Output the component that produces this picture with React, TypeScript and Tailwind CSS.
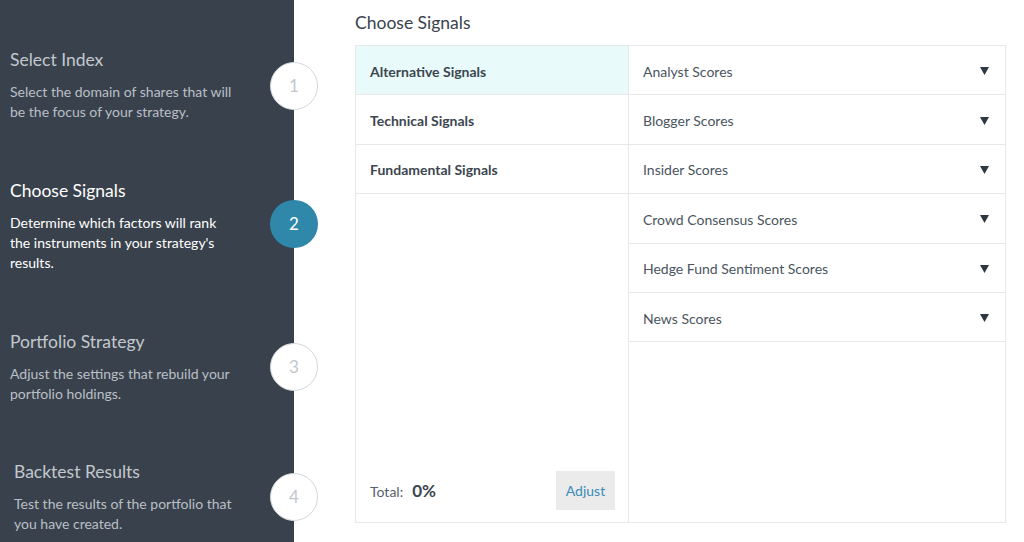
import React from 'react';

const steps = [
  {
    n: 1,
    title: 'Select Index',
    desc: ['Select the domain of shares that will', 'be the focus of your strategy.'],
    h: 'h-[131px]',
    circle: 'top-[13px]',
    indent: 'pl-[10px]',
  },
  {
    n: 2,
    title: 'Choose Signals',
    desc: ['Determine which factors will rank', "the instruments in your strategy's", 'results.'],
    h: 'h-[151px]',
    circle: 'top-[20px]',
    indent: 'pl-[10px]',
    active: true,
  },
  {
    n: 3,
    title: 'Portfolio Strategy',
    desc: ['Adjust the settings that rebuild your', 'portfolio holdings.'],
    h: 'h-[130px]',
    circle: 'top-[12px]',
    indent: 'pl-[10px]',
  },
  {
    n: 4,
    title: 'Backtest Results',
    desc: ['Test the results of the portfolio that', 'you have created.'],
    h: 'h-[81px]',
    circle: 'top-[12px]',
    indent: 'pl-[14px]',
  },
];

const categories = ['Alternative Signals', 'Technical Signals', 'Fundamental Signals'];
const scores = [
  'Analyst Scores',
  'Blogger Scores',
  'Insider Scores',
  'Crowd Consensus Scores',
  'Hedge Fund Sentiment Scores',
  'News Scores',
];

function Sidebar() {
  return (
    <div className="relative w-[294px] shrink-0 bg-[#39424c] pt-[49px]">
      {steps.map((s) => (
        <div key={s.n} className={`relative ${s.h} ${s.indent}`}>
          <div
            className={`text-[17.5px] leading-[22px] ${s.active ? 'text-white' : 'text-[#c3c8ce]'}`}
          >
            {s.title}
          </div>
          <div
            className={`mt-[11px] text-[14px] leading-[20px] ${s.active ? 'text-white' : 'text-[#b9bfc6]'}`}
          >
            {s.desc.map((d) => (
              <div key={d}>{d}</div>
            ))}
          </div>
          <div
            className={`absolute right-[-24px] ${s.circle} flex h-[48px] w-[48px] items-center justify-center rounded-full text-[17px] ${
              s.active
                ? 'bg-[#2f87aa] text-white'
                : 'border-[1.5px] border-[#d3d7db] bg-white text-[#c2c6cb]'
            }`}
          >
            {s.n}
          </div>
        </div>
      ))}
    </div>
  );
}

function Triangle() {
  return (
    <svg width="9" height="8" viewBox="0 0 9 8" className="mr-[16px]">
      <path d="M0 0 H9 L4.5 8 Z" fill="#2f3840" />
    </svg>
  );
}

export default function App() {
  return (
    <div
      className="flex h-[542px] w-[1024px] overflow-hidden bg-white"
      style={{ fontFamily: 'Lato, "Noto Sans", sans-serif' }}
    >
      <Sidebar />
      <div className="flex-1 pl-[61px] pt-[12px]">
        <div className="text-[17.5px] leading-[22px] text-[#39434d]">Choose Signals</div>
        <div className="mt-[11px] flex h-[478px] w-[651px] border border-[#e6e8eb]">
          <div className="flex w-[273px] flex-col border-r border-[#e6e8eb]">
            {categories.map((c, i) => (
              <div
                key={c}
                className={`flex h-[49.4px] items-center border-b border-[#e6e8eb] pl-[14px] pt-[2px] text-[14px] font-bold text-[#3c4650] ${
                  i === 0 ? 'bg-[#e9fafb]' : ''
                }`}
              >
                {c}
              </div>
            ))}
            <div className="mt-auto flex items-center justify-between pb-[12px] pl-[14px] pr-[13px]">
              <div className="flex items-baseline gap-[9px]">
                <span className="text-[14px] text-[#55606b]">Total:</span>
                <span className="text-[17px] font-bold text-[#3c4650]">0%</span>
              </div>
              <div className="flex h-[39px] w-[59px] items-center justify-center bg-[#ebebeb] text-[14px] text-[#3a8db5]">
                Adjust
              </div>
            </div>
          </div>
          <div className="flex flex-1 flex-col">
            {scores.map((s) => (
              <div
                key={s}
                className="flex h-[49.4px] items-center justify-between border-b border-[#e6e8eb] pl-[14px] pt-[2px] text-[14px] text-[#4a5560]"
              >
                <span>{s}</span>
                <Triangle />
              </div>
            ))}
          </div>
        </div>
      </div>
    </div>
  );
}
